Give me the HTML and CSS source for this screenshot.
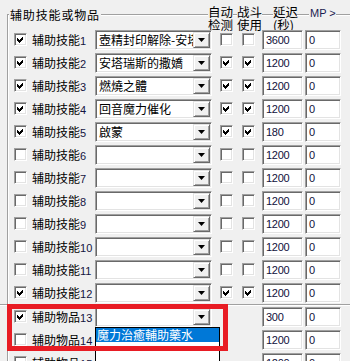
FILE: index.html
```html
<!DOCTYPE html>
<html>
<head>
<meta charset="utf-8">
<link rel="stylesheet" href="styles.css">
</head>
<body>
<div class="head">
  <div class="corner"></div>
  <div class="title">辅助技能或物品</div>
  <div class="line l1"></div>
  <div class="hc h-auto"><div>自动</div><div>检测</div></div>
  <div class="line l2"></div>
  <div class="hc h-fight"><div>战斗</div><div>使用</div></div>
  <div class="line l3"></div>
  <div class="hc h-delay"><div>延迟</div><div>(秒)</div></div>
  <div class="line l4"></div>
  <div class="hc h-mp">MP &gt;</div>
  <div class="line l5"></div>
</div>
<div class="group">
  <div class="row">
    <div class="cb on"><svg viewBox="0 0 11 11"><polygon points="2,4 4,6 8,2 8,5 4,9 2,7"/></svg></div>
    <div class="lb">辅助技能<span class="n">1</span></div>
    <div class="combo"><span class="ct">壺精封印解除-安塔瑞斯</span><span class="btn"><i></i></span></div>
    <div class="cb c-auto"></div>
    <div class="cb c-fight"></div>
    <div class="ed e-delay">3600</div>
    <div class="ed e-mp">0</div>
  </div>
  <div class="row">
    <div class="cb on"><svg viewBox="0 0 11 11"><polygon points="2,4 4,6 8,2 8,5 4,9 2,7"/></svg></div>
    <div class="lb">辅助技能<span class="n">2</span></div>
    <div class="combo"><span class="ct">安塔瑞斯的撒嬌</span><span class="btn"><i></i></span></div>
    <div class="cb c-auto"><svg viewBox="0 0 11 11"><polygon points="2,4 4,6 8,2 8,5 4,9 2,7"/></svg></div>
    <div class="cb c-fight"><svg viewBox="0 0 11 11"><polygon points="2,4 4,6 8,2 8,5 4,9 2,7"/></svg></div>
    <div class="ed e-delay">1200</div>
    <div class="ed e-mp">0</div>
  </div>
  <div class="row">
    <div class="cb on"><svg viewBox="0 0 11 11"><polygon points="2,4 4,6 8,2 8,5 4,9 2,7"/></svg></div>
    <div class="lb">辅助技能<span class="n">3</span></div>
    <div class="combo"><span class="ct">燃燒之體</span><span class="btn"><i></i></span></div>
    <div class="cb c-auto"><svg viewBox="0 0 11 11"><polygon points="2,4 4,6 8,2 8,5 4,9 2,7"/></svg></div>
    <div class="cb c-fight"><svg viewBox="0 0 11 11"><polygon points="2,4 4,6 8,2 8,5 4,9 2,7"/></svg></div>
    <div class="ed e-delay">1200</div>
    <div class="ed e-mp">0</div>
  </div>
  <div class="row">
    <div class="cb on"><svg viewBox="0 0 11 11"><polygon points="2,4 4,6 8,2 8,5 4,9 2,7"/></svg></div>
    <div class="lb">辅助技能<span class="n">4</span></div>
    <div class="combo"><span class="ct">回音魔力催化</span><span class="btn"><i></i></span></div>
    <div class="cb c-auto"><svg viewBox="0 0 11 11"><polygon points="2,4 4,6 8,2 8,5 4,9 2,7"/></svg></div>
    <div class="cb c-fight"><svg viewBox="0 0 11 11"><polygon points="2,4 4,6 8,2 8,5 4,9 2,7"/></svg></div>
    <div class="ed e-delay">1200</div>
    <div class="ed e-mp">0</div>
  </div>
  <div class="row">
    <div class="cb on"><svg viewBox="0 0 11 11"><polygon points="2,4 4,6 8,2 8,5 4,9 2,7"/></svg></div>
    <div class="lb">辅助技能<span class="n">5</span></div>
    <div class="combo"><span class="ct">啟蒙</span><span class="btn"><i></i></span></div>
    <div class="cb c-auto"><svg viewBox="0 0 11 11"><polygon points="2,4 4,6 8,2 8,5 4,9 2,7"/></svg></div>
    <div class="cb c-fight"><svg viewBox="0 0 11 11"><polygon points="2,4 4,6 8,2 8,5 4,9 2,7"/></svg></div>
    <div class="ed e-delay">180</div>
    <div class="ed e-mp">0</div>
  </div>
  <div class="row">
    <div class="cb"></div>
    <div class="lb">辅助技能<span class="n">6</span></div>
    <div class="combo"><span class="ct"></span><span class="btn"><i></i></span></div>
    <div class="cb c-auto"></div>
    <div class="cb c-fight"></div>
    <div class="ed e-delay">1200</div>
    <div class="ed e-mp">0</div>
  </div>
  <div class="row">
    <div class="cb"></div>
    <div class="lb">辅助技能<span class="n">7</span></div>
    <div class="combo"><span class="ct"></span><span class="btn"><i></i></span></div>
    <div class="cb c-auto"></div>
    <div class="cb c-fight"></div>
    <div class="ed e-delay">1200</div>
    <div class="ed e-mp">0</div>
  </div>
  <div class="row">
    <div class="cb"></div>
    <div class="lb">辅助技能<span class="n">8</span></div>
    <div class="combo"><span class="ct"></span><span class="btn"><i></i></span></div>
    <div class="cb c-auto"></div>
    <div class="cb c-fight"></div>
    <div class="ed e-delay">1200</div>
    <div class="ed e-mp">0</div>
  </div>
  <div class="row">
    <div class="cb"></div>
    <div class="lb">辅助技能<span class="n">9</span></div>
    <div class="combo"><span class="ct"></span><span class="btn"><i></i></span></div>
    <div class="cb c-auto"></div>
    <div class="cb c-fight"></div>
    <div class="ed e-delay">1200</div>
    <div class="ed e-mp">0</div>
  </div>
  <div class="row">
    <div class="cb"></div>
    <div class="lb">辅助技能<span class="n">10</span></div>
    <div class="combo"><span class="ct"></span><span class="btn"><i></i></span></div>
    <div class="cb c-auto"></div>
    <div class="cb c-fight"></div>
    <div class="ed e-delay">1200</div>
    <div class="ed e-mp">0</div>
  </div>
  <div class="row">
    <div class="cb"></div>
    <div class="lb">辅助技能<span class="n">11</span></div>
    <div class="combo"><span class="ct"></span><span class="btn"><i></i></span></div>
    <div class="cb c-auto"></div>
    <div class="cb c-fight"></div>
    <div class="ed e-delay">1200</div>
    <div class="ed e-mp">0</div>
  </div>
  <div class="row">
    <div class="cb on"><svg viewBox="0 0 11 11"><polygon points="2,4 4,6 8,2 8,5 4,9 2,7"/></svg></div>
    <div class="lb">辅助技能<span class="n">12</span></div>
    <div class="combo"><span class="ct"></span><span class="btn"><i></i></span></div>
    <div class="cb c-auto"><svg viewBox="0 0 11 11"><polygon points="2,4 4,6 8,2 8,5 4,9 2,7"/></svg></div>
    <div class="cb c-fight"><svg viewBox="0 0 11 11"><polygon points="2,4 4,6 8,2 8,5 4,9 2,7"/></svg></div>
    <div class="ed e-delay">1200</div>
    <div class="ed e-mp">0</div>
  </div>
  <div class="sep"></div>
  <div class="row">
    <div class="cb on"><svg viewBox="0 0 11 11"><polygon points="2,4 4,6 8,2 8,5 4,9 2,7"/></svg></div>
    <div class="lb">辅助物品<span class="n">13</span></div>
    <div class="combo"><span class="ct"></span><span class="btn"><i></i></span></div>
    <div class="cb c-auto none"></div>
    <div class="cb c-fight none"></div>
    <div class="ed e-delay">300</div>
    <div class="ed e-mp">0</div>
  </div>
  <div class="row">
    <div class="cb"></div>
    <div class="lb">辅助物品<span class="n">14</span></div>
    <div class="combo"><span class="ct"></span><span class="btn"><i></i></span></div>
    <div class="cb c-auto none"></div>
    <div class="cb c-fight none"></div>
    <div class="ed e-delay">1200</div>
    <div class="ed e-mp">0</div>
  </div>
  <div class="row">
    <div class="cb"></div>
    <div class="lb">辅助物品<span class="n">15</span></div>
    <div class="combo"><span class="ct"></span><span class="btn"><i></i></span></div>
    <div class="cb c-auto none"></div>
    <div class="cb c-fight none"></div>
    <div class="ed e-delay">1200</div>
    <div class="ed e-mp">0</div>
  </div>
</div>
<div class="droplist"><div class="opt sel">魔力治癒輔助藥水</div></div>
<div class="redbox"></div>
</body>
</html>
```
FILE: styles.css
```css
html, body {
  margin: 0;
  padding: 0;
}
body {
  background: #f0f0f0;
  width: 350px;
  height: 361px;
  overflow: hidden;
  position: relative;
  font-family: "Noto Sans CJK SC", "Noto Sans CJK TC", sans-serif;
  color: #000;
}

/* header / group box top edge */
.head {
  display: flex;
  height: 29px;
  white-space: nowrap;
}
.corner {
  margin-left: 7px;
  margin-top: 14px;
  width: 2px;
  height: 15px;
  box-sizing: border-box;
  border-top: 1px solid #a0a0a0;
  border-left: 1px solid #a0a0a0;
  box-shadow: inset 1px 1px #fff;
  flex: none;
}
.title {
  flex: none;
  width: 92px;
  box-sizing: border-box;
  padding-left: 1px;
  margin-top: 8px;
  height: 14px;
  font-size: 12px;
  line-height: 14px;
  letter-spacing: 0.85px;
}
.line {
  height: 2px;
  margin-top: 14px;
  box-sizing: border-box;
  border-top: 1px solid #a0a0a0;
  background: #fff;
  flex: none;
}
.l1 { width: 107px; }
.l2 { width: 4px; }
.l3 { width: 11px; }
.l4 { width: 12px; }
.l5 { flex: 1; }
.hc {
  flex: none;
  padding-top: 5px;
  font-size: 12.5px;
  line-height: 13px;
}
.h-auto { width: 25px; }
.h-fight { width: 25px; }
.h-delay { width: 24px; }
.h-mp {
  width: 27px;
  box-sizing: border-box;
  padding-left: 1px;
  padding-top: 7px;
  font-family: "Liberation Sans", sans-serif;
  font-size: 11px;
  line-height: 12px;
  color: #1b1b50;
}

/* group body */
.group {
  margin-left: 7px;
  padding-left: 1px;
  border-left: 1px solid #a0a0a0;
  box-shadow: inset 1px 0 #fff;
  height: 340px;
}
.row {
  display: flex;
  align-items: flex-start;
  height: 23px;
  box-sizing: border-box;
  padding-top: 1px;
}
.sep {
  height: 2px;
  margin-top: -1px;
  margin-left: -9px;
  box-sizing: border-box;
  border-top: 1px solid #a0a0a0;
  background: #fff;
}

.cb {
  flex: none;
  width: 13px;
  height: 13px;
  margin-top: 3px;
  box-sizing: border-box;
  background: #fff;
  border: 1px solid;
  border-color: #a0a0a0 #fff #fff #a0a0a0;
  box-shadow: inset 1px 1px #696969, inset -1px -1px #e3e3e3;
  margin-left: 5px;
  position: relative;
}
.cb svg {
  display: block;
  width: 11px;
  height: 11px;
  shape-rendering: crispEdges;
}
.cb svg polygon { fill: #000; }
.cb.none { visibility: hidden; }
.c-auto { margin-left: 8px; }
.c-fight { margin-left: 9px; }

.lb {
  flex: none;
  width: 63px;
  margin-left: 5px;
  font-size: 12px;
  line-height: 20px;
  white-space: nowrap;
}
.n {
  font-family: "Liberation Sans", sans-serif;
  font-size: 11px;
  color: #141440;
}

.combo {
  flex: none;
  width: 117px;
  height: 20px;
  box-sizing: border-box;
  padding: 1px;
  background: #fff;
  border: 1px solid;
  border-color: #a0a0a0 #fff #fff #a0a0a0;
  box-shadow: inset 1px 1px #696969, inset -1px -1px #e3e3e3;
  display: flex;
}
.ct {
  flex: 1;
  overflow: hidden;
  white-space: nowrap;
  padding-left: 2px;
  font-size: 12px;
  line-height: 16px;
}
.btn {
  flex: none;
  width: 17px;
  height: 16px;
  box-sizing: border-box;
  background: #f0f0f0;
  border: 1px solid;
  border-color: #e3e3e3 #696969 #696969 #e3e3e3;
  box-shadow: inset 1px 1px #fff, inset -1px -1px #a0a0a0;
  display: flex;
  align-items: center;
  justify-content: center;
}
.btn i {
  display: block;
  width: 7px;
  height: 4px;
  background: #000;
  clip-path: polygon(0 0, 100% 0, 50% 100%);
}

.ed {
  flex: none;
  height: 20px;
  box-sizing: border-box;
  background: #fff;
  border: 1px solid;
  border-color: #a0a0a0 #fff #fff #a0a0a0;
  box-shadow: inset 1px 1px #696969, inset -1px -1px #e3e3e3;
  padding-left: 3px;
  font-family: "Liberation Sans", sans-serif;
  font-size: 11px;
  letter-spacing: -0.3px;
  line-height: 18px;
  color: #10103a;
}
.e-delay { width: 41px; margin-left: 7px; }
.e-mp { width: 36px; margin-left: 2px; }

/* overlays */
.droplist {
  position: absolute;
  left: 95px;
  top: 327px;
  width: 125px;
  height: 40px;
  box-sizing: border-box;
  border: 1px solid #000;
  background: #fff;
}
.opt {
  height: 14px;
  line-height: 14px;
  font-size: 12px;
  padding-left: 1px;
  white-space: nowrap;
  overflow: hidden;
}
.opt.sel {
  background: #0078d7;
  color: #fff;
}
.redbox {
  position: absolute;
  left: 7px;
  top: 304px;
  width: 221px;
  height: 47px;
  box-sizing: border-box;
  border: 5px solid #e81c24;
}
```
